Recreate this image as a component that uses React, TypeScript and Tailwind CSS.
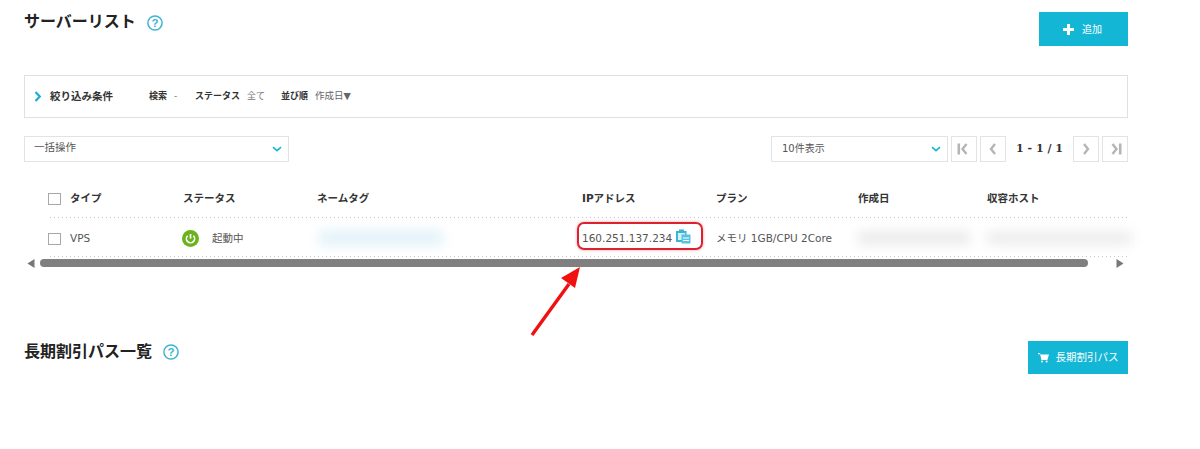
import React from "react";

const jp = "font-['DejaVu_Sans','Noto_Sans_CJK_JP',sans-serif]";
const dots = "bg-[linear-gradient(90deg,#c8c8c8_1px,transparent_1px)] bg-[length:4px_1px] bg-bottom bg-repeat-x";

function Help() {
  return (
    <svg width="16" height="16" viewBox="0 0 16 16" className="shrink-0">
      <circle cx="8" cy="8" r="7.1" fill="none" stroke="#3fb4d2" strokeWidth="1.5" />
      <text x="8" y="12" textAnchor="middle" fontSize="11.5" fontWeight="700" fill="#3fb4d2" fontFamily="Liberation Sans">?</text>
    </svg>
  );
}

function Chevron() {
  return (
    <svg width="10" height="6" viewBox="0 0 10 6" className="shrink-0">
      <path d="M1 1.2 L5 4.6 L9 1.2" fill="none" stroke="#17b6d6" strokeWidth="1.7" />
    </svg>
  );
}

function PageBtn({ d, bar }: { d: string; bar?: "l" | "r" }) {
  return (
    <div className="w-[26px] h-[26px] border border-[#e3e3e3] flex items-center justify-center">
      <svg width="18" height="14" viewBox="0 0 18 14">
        {bar === "l" && <rect x="2.5" y="1.5" width="2.6" height="11" fill="#b5b5b5" />}
        {bar === "r" && <rect x="12.9" y="1.5" width="2.6" height="11" fill="#b5b5b5" />}
        <path d={d} fill="none" stroke="#b5b5b5" strokeWidth="2.4" />
      </svg>
    </div>
  );
}

function Check() {
  return <span className="block w-[13px] h-[12px] border border-[#a8a8a8] bg-white shrink-0" />;
}

export default function App() {
  return (
    <div className={`relative w-[1200px] h-[449px] bg-white overflow-hidden text-[#333] ${jp}`}>
      <div className="w-[1104px] ml-6 flex flex-col">
        <div className="h-[75px] pt-3 flex justify-between items-start">
          <div className="flex items-center gap-[13px] -mt-[2px]">
            <h1 className="text-[16px] leading-[24px] font-bold text-[#222]">サーバーリスト</h1>
            <div className="-ml-[2px] mt-[1px]"><Help /></div>
          </div>
          <div className="w-[89px] h-[34px] bg-[#14b6d6] flex items-center justify-center gap-[8px] pr-[2px] text-white text-[10px]">
            <svg width="11" height="11" viewBox="0 0 11 11"><path d="M4 0h3v4h4v3H7v4H4V7H0V4h4z" fill="#fff" /></svg>
            <span>追加</span>
          </div>
        </div>

        <div className="h-[43px] border border-[#e0e0e0] flex items-center pl-[9px] text-[9px]">
          <svg width="8" height="11" viewBox="0 0 8 11" className="shrink-0"><path d="M1.5 1 L5.8 5.5 L1.5 10" fill="none" stroke="#17b0d0" strokeWidth="2.2" /></svg>
          <span className="ml-[8px] text-[10.5px] font-bold text-[#333] w-[99px]">絞り込み条件</span>
          <span className="font-bold text-[#333] w-[25px]">検索</span>
          <span className="text-[#777] w-[21px]">-</span>
          <span className="font-bold text-[#333] w-[52px]">ステータス</span>
          <span className="text-[#777] w-[34px]">全て</span>
          <span className="font-bold text-[#333] w-[34px]">並び順</span>
          <span className="text-[#666] text-[9.5px]">作成日▼</span>
        </div>

        <div className="mt-[18px] h-[26px] flex items-center justify-between">
          <div className="w-[265px] h-[26px] border border-[#e3e3e3] flex items-center justify-between pl-[9px] pr-[6px] text-[10.5px] text-[#555]">
            <span className="-mt-[2px]">一括操作</span>
            <Chevron />
          </div>
          <div className="flex items-center">
            <div className="w-[177px] h-[26px] border border-[#e3e3e3] flex items-center justify-between pl-[10px] pr-[6px] text-[10px] text-[#555]">
              <span className="-mt-[2px]">10件表示</span>
              <Chevron />
            </div>
            <div className="ml-[3px]"><PageBtn bar="l" d="M11.5 2 L7.5 7 L11.5 12" /></div>
            <div className="ml-[3px]"><PageBtn d="M11 2 L7 7 L11 12" /></div>
            <div className="w-[67px] text-center text-[11px] font-bold font-['DejaVu_Serif',serif] text-[#333]">1 - 1 / 1</div>
            <PageBtn d="M7 2 L11 7 L7 12" />
            <div className="ml-[3px]"><PageBtn bar="r" d="M6.5 2 L10.5 7 L6.5 12" /></div>
          </div>
        </div>

        <div className={`mt-[17px] ml-6 h-[39px] flex items-center text-[10.5px] font-bold text-[#333] ${dots}`}>
          <div className="w-[135px] flex items-center gap-[9px]"><Check /><span>タイプ</span></div>
          <div className="w-[134px]">ステータス</div>
          <div className="w-[265px]">ネームタグ</div>
          <div className="w-[134px]">IPアドレス</div>
          <div className="w-[142px]">プラン</div>
          <div className="w-[129px]">作成日</div>
          <div>収容ホスト</div>
        </div>

        <div className={`ml-6 h-[39px] pt-[2px] flex items-center text-[10.5px] text-[#555] ${dots}`}>
          <div className="w-[135px] flex items-center gap-[9px]"><Check /><span>VPS</span></div>
          <div className="w-[134px] flex items-center gap-[13px]">
            <svg width="17" height="17" viewBox="0 0 17 17" className="shrink-0 -ml-[1px]">
              <circle cx="8.5" cy="8.5" r="8.5" fill="#6bb31d" />
              <path d="M5.6 5.8 A4.1 4.1 0 1 0 11.4 5.8" fill="none" stroke="#fff" strokeWidth="1.6" />
              <path d="M8.5 4 V8.6" stroke="#fff" strokeWidth="1.7" />
            </svg>
            <span>起動中</span>
          </div>
          <div className="w-[265px] h-[22px] flex items-center">
            <div className="w-[124px] h-[16px] ml-[2px] -mt-[2px] bg-[#e3f3f9] blur-[6px]" />
          </div>
          <div className="w-[134px]">160.251.137.234</div>
          <div className="w-[142px]">メモリ 1GB/CPU 2Core</div>
          <div className="w-[129px]"><div className="w-[112px] h-[14px] -mt-[2px] bg-[#ebebeb] blur-[6px]" /></div>
          <div className="flex-1 min-w-0"><div className="w-[145px] h-[14px] -mt-[2px] bg-[#ededed] blur-[6px]" /></div>
        </div>

        <div className="mt-[1px] h-[10px] flex items-center">
          <svg width="8" height="9" viewBox="0 0 8 9" className="ml-[3px] shrink-0"><path d="M7.5 0 V9 L0.5 4.5 Z" fill="#777" /></svg>
          <div className="ml-[5px] w-[1048px] h-[8px] rounded-full bg-[#808080]" />
          <svg width="8" height="9" viewBox="0 0 8 9" className="ml-[28px] shrink-0"><path d="M0.5 0 V9 L7.5 4.5 Z" fill="#777" /></svg>
        </div>

        <div className="mt-[73px] flex justify-between items-start">
          <div className="flex items-center gap-[11px]">
            <h2 className="text-[16px] leading-[22px] font-bold text-[#222]">長期割引パス一覧</h2>
            <Help />
          </div>
          <div className="w-[100px] h-[33px] bg-[#14b6d6] flex items-center justify-center gap-[7px] text-white text-[10.5px]">
            <svg width="11" height="11" viewBox="0 0 11 11"><path d="M0 1h2l.4 1.4H11L9.6 7H3.4L2 2.2H0z M3.3 7h6.2v1H3.3z" fill="#fff" /><circle cx="4" cy="9.6" r="1" fill="#fff" /><circle cx="8.6" cy="9.6" r="1" fill="#fff" /></svg>
            <span>長期割引パス</span>
          </div>
        </div>
      </div>

      {/* annotation over the table */}
      <div className="absolute left-[577px] top-[222px] w-[126px] h-[28px] rounded-[7px] border-2 border-[#dc2230] shadow-[0_0_3px_rgba(220,34,48,0.45)] flex items-center justify-end pr-[10px]">
        <svg width="16" height="16" viewBox="0 0 16 16">
          <path d="M1 3h3V1.5h5V3h2.5v4H7v7H1z" fill="#3cb4d4" />
          <rect x="3" y="5" width="7" height="7" fill="#d5f0f7" />
          <rect x="6.5" y="6.5" width="9" height="9" fill="#58c3de" />
          <path d="M8 10h6M8 12.5h6" stroke="#fff" strokeWidth="1" />
        </svg>
      </div>
      <svg className="absolute left-[525px] top-[260px]" width="60" height="80" viewBox="0 0 60 80">
        <path d="M7 75 L44 24" stroke="#f01010" strokeWidth="3.4" />
        <path d="M55 7 L36 18 L50 28 Z" fill="#f01010" />
      </svg>
    </div>
  );
}
